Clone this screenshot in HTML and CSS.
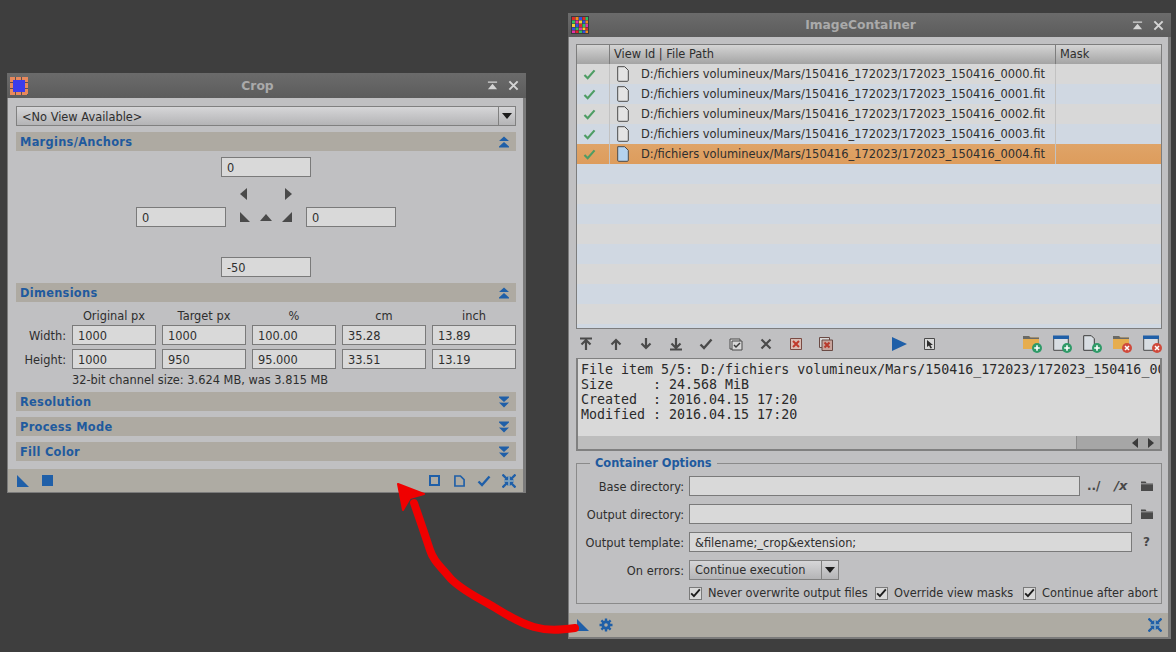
FILE: index.html
```html
<!DOCTYPE html>
<html lang="en">
<head>
<meta charset="utf-8">
<title>Crop and ImageContainer</title>
<link rel="stylesheet" href="styles.css">
</head>
<body>
<svg class="defs" aria-hidden="true">
  <symbol id="shade" viewBox="0 0 12 12"><path d="M1 1.500h10v1.600H1zM6 4l5 6H1z" fill="currentColor"/></symbol>
  <symbol id="close" viewBox="0 0 12 12"><path d="M1.500 1.500l9 9M10.500 1.500l-9 9" stroke="currentColor" stroke-width="2.200" fill="none"/></symbol>
  <symbol id="chevup" viewBox="0 0 12 12"><path d="M6 0.500l5 4.500H1zM6 6l5 4.500v1H1v-1z" fill="#1f5fa8"/></symbol>
  <symbol id="chevdown" viewBox="0 0 12 12"><path d="M1 .5h10v1L6 6 1 1.500zM1 6.500l5 .2 5-.2L6 11.500z" fill="#1f5fa8"/></symbol>
  <symbol id="corner" viewBox="0 0 12 12"><path d="M0 0l12 12H0z" fill="currentColor"/></symbol>
  <symbol id="collapse" viewBox="0 0 14 14"><path d="M.5.500l5 5M13.500.5l-5 5M.5 13.500l5-5M13.500 13.500l-5-5" stroke="#1f5fa8" stroke-width="2.300" fill="none"/><path d="M6.200 6.200V2L2 6.200zM7.800 6.200V2L12 6.200zM6.200 7.800V12L2 7.800zM7.800 7.800V12L12 7.800z" fill="#1f5fa8"/><path d="M2 7h10M7 2v10" stroke="#5a9fd8" stroke-width=".8"/></symbol>
  <symbol id="check" viewBox="0 0 14 12"><path d="M1.500 6.500l3.500 3.500 7.500-8.500" stroke="currentColor" stroke-width="2.400" fill="none"/></symbol>
  <symbol id="doc" viewBox="0 0 12 16"><path d="M.7.7h7l3.600 3.600v10a1 1 0 0 1-1 1h-8.600a1 1 0 0 1-1-1z" fill="currentColor" stroke="#4a4a4a" stroke-width="1"/></symbol>
  <symbol id="top" viewBox="0 0 14 14"><path d="M1 1.500h12M7 13V4M2.500 7.500L7 3l4.500 4.500" stroke="currentColor" stroke-width="2.200" fill="none"/></symbol>
  <symbol id="up" viewBox="0 0 14 14"><path d="M7 13V3M2.500 7.500L7 3l4.500 4.500" stroke="currentColor" stroke-width="2.200" fill="none"/></symbol>
  <symbol id="folder" viewBox="0 0 12 10"><path d="M0 .5h4.500l1 1.500H12v8H0z" fill="currentColor"/><path d="M0 2.800h12" stroke="#c0c0c2" stroke-width=".8"/></symbol>
  <symbol id="plus" viewBox="0 0 10 10"><circle cx="5" cy="5" r="5" fill="#2f9a68"/><path d="M5 2.200v5.600M2.200 5h5.600" stroke="#fff" stroke-width="1.600"/></symbol>
  <symbol id="minus" viewBox="0 0 10 10"><circle cx="5" cy="5" r="5" fill="#cf4a3c"/><path d="M3 3l4 4M7 3l-4 4" stroke="#fff" stroke-width="1.500"/></symbol>
  <symbol id="foldertool" viewBox="0 0 16 14"><path d="M0 1h6l1.500 1.500H16V14H0z" fill="#e6ad4e"/><path d="M0 1h6l1.500 1.500H16V4H0z" fill="#6a6a66"/></symbol>
  <symbol id="wintool" viewBox="0 0 16 16"><path d="M.7 1.500h14.600v13.800H.7z" fill="#d8dde2" stroke="#4a4a4a"/><path d="M0 .5h16V4H0z" fill="#1f5fa8"/></symbol>
  <symbol id="doctool" viewBox="0 0 12 16"><path d="M.7.7h7.600l3 3v11.600H.7z" fill="#d8dde2" stroke="#3c3c3c"/></symbol>
</svg>

<section class="win win-crop">
  <header class="titlebar">
    <svg class="logo" width="18" height="18" viewBox="0 0 18 18"><rect width="18" height="18" fill="#5a5052"/><path d="M0 1.500h18M0 16.500h18M1.500 0v18M16.500 0v18" stroke="#e8885c" stroke-width="3" stroke-dasharray="5 1"/><rect x="3" y="3" width="12" height="12" fill="#3c3cec"/></svg>
    <h1 class="wintitle">Crop</h1>
    <svg class="tbtn" width="11" height="11"><use href="#shade"/></svg>
    <svg class="tbtn" width="11" height="11"><use href="#close"/></svg>
  </header>
  <div class="body crop-body">
    <div class="combo combo-wide"><span class="combo-text">&lt;No View Available&gt;</span><span class="combo-btn"></span></div>
    <div class="sect"><span>Margins/Anchors</span><svg width="12" height="12"><use href="#chevup"/></svg></div>
    <div class="anchors">
      <div class="edit edit-90">0</div>
      <div class="arrows"><span class="tri-left"></span><span class="tri-right"></span></div>
      <div class="midrow">
        <div class="edit edit-90">0</div>
        <div class="cornerset">
          <svg width="10" height="10"><use href="#corner"/></svg>
          <span class="tri-up"></span>
          <svg class="flip" width="10" height="10"><use href="#corner"/></svg>
        </div>
        <div class="edit edit-90">0</div>
      </div>
      <div class="edit edit-90">-50</div>
    </div>
    <div class="sect"><span>Dimensions</span><svg width="12" height="12"><use href="#chevup"/></svg></div>
    <div class="dims">
      <span></span><span class="dh">Original px</span><span class="dh">Target px</span><span class="dh">%</span><span class="dh">cm</span><span class="dh">inch</span>
      <span class="dl">Width:</span><div class="edit">1000</div><div class="edit">1000</div><div class="edit">100.00</div><div class="edit">35.28</div><div class="edit">13.89</div>
      <span class="dl">Height:</span><div class="edit">1000</div><div class="edit">950</div><div class="edit">95.000</div><div class="edit">33.51</div><div class="edit">13.19</div>
    </div>
    <p class="info">32-bit channel size: 3.624 MB, was 3.815 MB</p>
    <div class="sect"><span>Resolution</span><svg width="12" height="12"><use href="#chevdown"/></svg></div>
    <div class="sect"><span>Process Mode</span><svg width="12" height="12"><use href="#chevdown"/></svg></div>
    <div class="sect"><span>Fill Color</span><svg width="12" height="12"><use href="#chevdown"/></svg></div>
  </div>
  <footer class="foot crop-foot">
    <svg width="12" height="12" class="blue"><use href="#corner"/></svg>
    <span class="foot-square"></span>
    <span class="spacer"></span>
    <span class="foot-outline"></span>
    <svg width="11" height="12" viewBox="0 0 12 13" class="foot-page"><path d="M1 1h6l4 4v7H1z" fill="none" stroke="#1f5fa8" stroke-width="1.800"/></svg>
    <svg width="14" height="12" class="blue"><use href="#check"/></svg>
    <svg class="foot-collapse" width="14" height="14"><use href="#collapse"/></svg>
  </footer>
</section>

<section class="win win-ic">
  <header class="titlebar">
    <svg class="logo" width="18" height="18" viewBox="0 0 18 18">
      <rect width="18" height="18" fill="#3a3a3e"/>
      <rect x="1" y="1" width="3" height="3" fill="#e02828"/><rect x="4.500" y="1" width="3" height="3" fill="#f08a20"/><rect x="8" y="1" width="3" height="3" fill="#3050e0"/><rect x="11.500" y="1" width="3" height="3" fill="#e02828"/><rect x="14.500" y="1" width="2.500" height="3" fill="#30c060"/>
      <rect x="1" y="4.500" width="3" height="3" fill="#30c060"/><rect x="4.500" y="4.500" width="3" height="3" fill="#e030a8"/><rect x="8" y="4.500" width="3" height="3" fill="#f0d030"/><rect x="11.500" y="4.500" width="3" height="3" fill="#3050e0"/><rect x="14.500" y="4.500" width="2.500" height="3" fill="#f08a20"/>
      <rect x="1" y="8" width="3" height="3" fill="#f0d030"/><rect x="4.500" y="8" width="3" height="3" fill="#3050e0"/><rect x="8" y="8" width="3" height="3" fill="#e02828"/><rect x="11.500" y="8" width="3" height="3" fill="#30c060"/><rect x="14.500" y="8" width="2.500" height="3" fill="#e030a8"/>
      <rect x="1" y="11.500" width="3" height="2.500" fill="#3050e0"/><rect x="4.500" y="11.500" width="3" height="2.500" fill="#30c060"/><rect x="8" y="11.500" width="3" height="2.500" fill="#e030a8"/><rect x="11.500" y="11.500" width="3" height="2.500" fill="#f0d030"/><rect x="14.500" y="11.500" width="2.500" height="2.500" fill="#e02828"/>
      <rect x="1" y="14.500" width="3" height="2.500" fill="#e030a8"/><rect x="4.500" y="14.500" width="3" height="2.500" fill="#e02828"/><rect x="8" y="14.500" width="3" height="2.500" fill="#30c060"/><rect x="11.500" y="14.500" width="3" height="2.500" fill="#3050e0"/><rect x="14.500" y="14.500" width="2.500" height="2.500" fill="#f08a20"/>
    </svg>
    <h1 class="wintitle">ImageContainer</h1>
    <svg class="tbtn" width="11" height="11"><use href="#shade"/></svg>
    <svg class="tbtn" width="11" height="11"><use href="#close"/></svg>
  </header>
  <div class="body ic-body">
    <div class="table">
      <div class="row head"><span></span><span>View Id | File Path</span><span>Mask</span></div>
      <div class="row"><span class="c-check"><svg width="13" height="11"><use href="#check"/></svg></span><span class="c-path"><svg class="file" width="12" height="16"><use href="#doc"/></svg>D:/fichiers volumineux/Mars/150416_172023/172023_150416_0000.fit</span><span></span></div>
      <div class="row"><span class="c-check"><svg width="13" height="11"><use href="#check"/></svg></span><span class="c-path"><svg class="file" width="12" height="16"><use href="#doc"/></svg>D:/fichiers volumineux/Mars/150416_172023/172023_150416_0001.fit</span><span></span></div>
      <div class="row"><span class="c-check"><svg width="13" height="11"><use href="#check"/></svg></span><span class="c-path"><svg class="file" width="12" height="16"><use href="#doc"/></svg>D:/fichiers volumineux/Mars/150416_172023/172023_150416_0002.fit</span><span></span></div>
      <div class="row"><span class="c-check"><svg width="13" height="11"><use href="#check"/></svg></span><span class="c-path"><svg class="file" width="12" height="16"><use href="#doc"/></svg>D:/fichiers volumineux/Mars/150416_172023/172023_150416_0003.fit</span><span></span></div>
      <div class="row selected"><span class="c-check"><svg width="13" height="11"><use href="#check"/></svg></span><span class="c-path"><svg class="file" width="12" height="16"><use href="#doc"/></svg>D:/fichiers volumineux/Mars/150416_172023/172023_150416_0004.fit</span><span></span></div>
      <div class="empty"></div><div class="empty"></div><div class="empty"></div><div class="empty"></div><div class="empty"></div><div class="empty"></div><div class="empty"></div><div class="empty"></div>
    </div>
    <div class="toolbar">
      <svg class="t" width="14" height="14"><use href="#top"/></svg>
      <svg class="t" width="14" height="14"><use href="#up"/></svg>
      <svg class="t down" width="14" height="14"><use href="#up"/></svg>
      <svg class="t down" width="14" height="14"><use href="#top"/></svg>
      <svg class="t" width="14" height="12"><use href="#check"/></svg>
      <svg class="t" width="14" height="14" viewBox="0 0 14 14"><path d="M1 2h10v10H1z" fill="#d8d8d8" stroke="#4a4a4a"/><path d="M3 4h10v9H3z" fill="#d8d8d8" stroke="#4a4a4a"/><path d="M5 8l2 2 4-4" stroke="#3a3a3a" stroke-width="1.500" fill="none"/></svg>
      <svg class="t" width="14" height="14" viewBox="-1 -1 14 14"><use href="#close" width="12" height="12"/></svg>
      <svg class="t" width="14" height="14" viewBox="0 0 14 14"><path d="M1.500 1.500h11v11h-11z" fill="#d8bcb4" stroke="#7a4a42"/><path d="M4 4l6 6M10 4l-6 6" stroke="#c0392b" stroke-width="2"/></svg>
      <svg class="t" width="14" height="14" viewBox="0 0 14 14"><path d="M.5.500h10v10H.500z" fill="#d8d8d8" stroke="#6a4a44"/><path d="M3 3h10.500v10.500H3z" fill="#c8a49c" stroke="#6a4a44"/><path d="M5.500 5.500l5 5M10.500 5.500l-5 5" stroke="#b83a2c" stroke-width="2"/></svg>
      <svg class="t-play" width="16" height="16" viewBox="0 0 16 16"><path d="M1 1l15 7-15 7z" fill="#1f5fa8"/></svg>
      <svg class="t-pick" width="11" height="12" viewBox="0 0 11 12"><path d="M.5.500h10v11H.500z" fill="#d8d8d8" stroke="#4a4a4a"/><path d="M3 2v7l2-1.500 1.500 3 1.500-.6L6.500 7H9z" fill="#2c2c2c"/></svg>
      <span class="spacer"></span>
      <span class="ti"><svg width="16" height="14"><use href="#foldertool"/></svg><svg class="badge" width="10" height="10"><use href="#plus"/></svg></span>
      <span class="ti"><svg width="16" height="16"><use href="#wintool"/></svg><svg class="badge" width="10" height="10"><use href="#plus"/></svg></span>
      <span class="ti"><svg width="12" height="16"><use href="#doctool"/></svg><svg class="badge" width="10" height="10"><use href="#plus"/></svg></span>
      <span class="ti"><svg width="16" height="14"><use href="#foldertool"/></svg><svg class="badge" width="10" height="10"><use href="#minus"/></svg></span>
      <span class="ti"><svg width="16" height="16"><use href="#wintool"/></svg><svg class="badge" width="10" height="10"><use href="#minus"/></svg></span>
    </div>
    <div class="console">
      <pre class="console-text">File item 5/5: D:/fichiers volumineux/Mars/150416_172023/172023_150416_0004.fit
Size     : 24.568 MiB
Created  : 2016.04.15 17:20
Modified : 2016.04.15 17:20</pre>
      <div class="scroll"><span class="thumb"></span><span class="spacer"></span><span class="tri-left tri-sl"></span><span class="tri-right tri-sr"></span></div>
    </div>
    <fieldset class="opts">
      <legend>Container Options</legend>
      <div class="opt"><span class="opt-l">Base directory:</span><div class="edit edit-flex"></div><span class="tail tail-3"><b>../</b><b class="slashx">/x</b><svg class="dark" width="12" height="10"><use href="#folder"/></svg></span></div>
      <div class="opt"><span class="opt-l">Output directory:</span><div class="edit edit-flex"></div><span class="tail"><svg class="dark" width="12" height="10"><use href="#folder"/></svg></span></div>
      <div class="opt"><span class="opt-l">Output template:</span><div class="edit edit-flex">&amp;filename;_crop&amp;extension;</div><span class="tail"><b>?</b></span></div>
      <div class="opt"><span class="opt-l">On errors:</span><div class="combo combo-err"><span class="combo-text">Continue execution</span><span class="combo-btn"></span></div></div>
      <div class="checks">
        <label class="ck ck-1"><span class="box"><svg width="11" height="10"><use href="#check"/></svg></span>Never overwrite output files</label>
        <label class="ck ck-2"><span class="box"><svg width="11" height="10"><use href="#check"/></svg></span>Override view masks</label>
        <label class="ck"><span class="box"><svg width="11" height="10"><use href="#check"/></svg></span>Continue after abort</label>
      </div>
    </fieldset>
  </div>
  <footer class="foot ic-foot">
    <svg width="12" height="12" class="blue"><use href="#corner"/></svg>
    <svg width="14" height="14" viewBox="0 0 14 14" class="gear"><circle cx="7" cy="7" r="4.500" fill="#1f5fa8"/><path d="M7 .5v13M.5 7h13M2.400 2.400l9.200 9.200M11.600 2.400l-9.200 9.200" stroke="#1f5fa8" stroke-width="2.400"/><circle cx="7" cy="7" r="1.800" fill="#aeaba3"/></svg>
    <span class="spacer"></span>
    <svg width="14" height="14"><use href="#collapse"/></svg>
  </footer>
</section>

<svg class="arrow" width="1176" height="652" viewBox="0 0 1176 652" aria-hidden="true">
  <path d="M575 628C560 630 548 631 534 627C515 622 500 610 487 603C472 595 460 588 451 579C440 566 433 560 430 550C425 535 420 520 414 503" fill="none" stroke="#f00000" stroke-width="8" stroke-linecap="round" stroke-linejoin="round"/>
  <path d="M398 484L424 494L410 498L403 510Z" fill="#f00000" stroke="#f00000" stroke-width="2" stroke-linejoin="round"/>
</svg>
</body>
</html>
```
FILE: styles.css
```css
* { box-sizing: border-box; }
html, body { margin: 0; height: 652px; overflow: hidden; background: #3e3e3e; }
body { position: relative; font: 11.400px/14px "DejaVu Sans", Verdana, sans-serif; color: #2e2e2e; }
.defs { position: absolute; width: 0; height: 0; }
p, h1 { margin: 0; }

.win { position: absolute; display: flex; flex-direction: column; border-style: solid; border-color: #7b7b7b; border-width: 0 3px 2px 1px; background: #c0c0c2; }
.win-crop { left: 7px; top: 73px; width: 519px; height: 420px; border-bottom-width: 1px; }
.win-ic { left: 568px; top: 13px; width: 603px; height: 626px; }

.titlebar { display: flex; align-items: center; flex: none; height: 25px; margin: 0 -3px 0 -1px; padding: 0 7px 0 3px; gap: 10px; background: linear-gradient(#6b6b6b, #5c5c5c); color: #d4d4d4; }
.win-ic .titlebar { height: 24px; }
.wintitle { flex: 1; text-align: center; font: bold 12.300px/16px "DejaVu Sans", sans-serif; color: #aaaaaa; }
.tbtn { display: block; }

.body { flex: 1; min-height: 0; }
.crop-body { padding: 8px 7px 0 8px; }
.ic-body { padding: 7px 6px 0 7px; }

.foot { display: flex; align-items: center; flex: none; background: #aeaba3; }
.crop-foot { height: 23px; padding: 0 7px 0 9px; gap: 12px; }
.spacer { flex: 1; }
.blue { color: #1f5fa8; display: block; }
.foot-square { width: 11px; height: 11px; margin-left: 1px; background: #1f5fa8; }
.foot-outline { width: 11px; height: 11px; margin-right: 2px; border: 2px solid #1f5fa8; }
.foot-collapse { margin-left: -1px; }
.ic-foot { height: 24px; padding: 0 6px 0 8px; gap: 10px; }

.combo { display: flex; align-items: center; height: 20px; border: 1px solid #808080; background: linear-gradient(#d6d6d8, #b4b4b6); }
.combo-text { flex: 1; padding: 1px 0 0 5px; white-space: nowrap; }
.combo-err .combo-text { padding-top: 0; }
.combo-btn { position: relative; width: 17px; height: 100%; border-left: 1px solid #808080; }
.combo-btn::after { content: ""; position: absolute; left: 3px; top: 6px; border: 5px solid transparent; border-top: 6px solid #1c1c1c; border-bottom: 0; }
.combo-err { width: 150px; }

.sect { display: flex; align-items: center; justify-content: space-between; height: 19px; margin-top: 6px; padding: 0 6px 0 4px; background: #aeaaa2; color: #1f5a9e; font-weight: bold; letter-spacing: .3px; }
.sect > span { padding-top: 1px; }
.sect > svg { margin-top: 1px; }

.edit { height: 20px; padding-left: 5px; border: 1px solid #7a7a7a; background: #d9d9d9; line-height: 20px; white-space: nowrap; }
.edit-90 { width: 90px; }
.edit-flex { flex: 1; }

.anchors { display: flex; flex-direction: column; align-items: center; margin-top: 6px; }
.arrows { display: flex; justify-content: space-between; align-items: center; width: 52px; height: 30px; padding-top: 4px; }
.tri-left { width: 0; height: 0; border: 6px solid transparent; border-right: 7px solid #4a4a4a; border-left: 0; }
.tri-right { width: 0; height: 0; border: 6px solid transparent; border-left: 7px solid #4a4a4a; border-right: 0; }
.tri-up { width: 0; height: 0; border: 6px solid transparent; border-bottom: 7px solid #4a4a4a; border-top: 0; }
.tri-sl { border-width: 5px 6px 5px 0; border-right-color: #3a3a3a; }
.tri-sr { border-width: 5px 0 5px 6px; border-left-color: #3a3a3a; }
.midrow { display: flex; align-items: center; margin-bottom: 30px; }
.cornerset { display: flex; justify-content: center; align-items: center; gap: 10px; width: 80px; color: #4a4a4a; }
.flip { transform: scaleX(-1); }

.dims { display: grid; grid-template-columns: 50px repeat(5, 84px); column-gap: 6px; row-gap: 4px; grid-template-rows: 14px 20px 20px; margin-top: 5px; }
.dh { text-align: center; line-height: 18px; white-space: nowrap; }
.dl { text-align: right; line-height: 22px; white-space: nowrap; }
.info { height: 13px; margin-top: 4px; padding-left: 56px; line-height: 14px; }

.table { height: 285px; border: 1px solid #7d7d7d; overflow: hidden; background: #d0d8e2; }
.table > :nth-child(even) { background: #d8d8d8; }
.table > :nth-child(odd) { background: #d0d8e2; }
.row { display: grid; grid-template-columns: 33px 446px 1fr; height: 20px; line-height: 20px; }
.row > span { border-right: 1px solid #c2c2c2; }
.row > span:last-child { border-right: 0; padding-left: 4px; }
.row.head { height: 19px; background: linear-gradient(#d4d4d4, #a4a4a4); line-height: 19px; }
.head > span { border-right: 1px solid #7d7d7d; }
.head > span:nth-child(2) { padding-left: 4px; }
.row.selected { background: linear-gradient(#dfa468, #dd9c5c); }
.c-check { display: flex; align-items: center; justify-content: center; padding-right: 8px; color: #4e9d64; }
.c-path { display: flex; align-items: center; padding-left: 7px; white-space: nowrap; font-size: 11.450px; }
.file { margin-right: 12px; color: #e4e4e4; flex: none; }
.selected .file { color: #b4d2ee; }
.empty { height: 20px; }

.toolbar { display: flex; align-items: center; height: 29px; padding-left: 3px; color: #4a4a4a; }
.t { margin-right: 16px; display: block; flex: none; }
.t:nth-child(9) { margin-right: 0; }
.down { transform: scaleY(-1); }
.t-play { margin-left: 58px; }
.t-pick { margin-left: 17px; }
.ti { position: relative; display: flex; width: 20px; height: 18px; margin-left: 10px; padding-left: 1px; align-items: flex-start; }
.badge { position: absolute; right: 0; bottom: 0; }

.console { display: flex; flex-direction: column; height: 93px; border: 2px solid #808080; border-top-width: 1px; background: #d9d9d9; overflow: hidden; }
.console-text { flex: 1; margin: 0; padding: 3px 3px; font: 13.300px/15px "DejaVu Sans Mono", "Liberation Mono", monospace; color: #2a2a2a; white-space: pre; overflow: hidden; }
.scroll { display: flex; align-items: center; flex: none; height: 13px; background: #a6a6a6; padding-right: 6px; gap: 10px; }
.thumb { width: 499px; height: 100%; background: #bdbdbd; border-right: 1px solid #8c8c8c; }

.opts { margin: 6px 0 0; padding: 6px 0 0; height: 147px; border: 1px solid #8a8a8a; min-width: 0; }
.opts legend { margin-left: 13px; padding: 0 5px; color: #1f5a9e; font-weight: bold; line-height: 13px; }
.opt { display: flex; align-items: center; height: 20px; margin-bottom: 8px; }
.opt-l { width: 107px; margin-right: 5px; padding-top: 2px; text-align: right; white-space: nowrap; flex: none; }
.tail { display: flex; justify-content: center; align-items: center; width: 29px; color: #484848; font-weight: bold; font-size: 12px; flex: none; }
.tail-3 { width: 81px; justify-content: space-between; padding: 0 8px 0 7px; }
.slashx { font-size: 13px; font-style: italic; }
.dark { color: #4a4a4a; display: block; }
.checks { display: flex; margin: -2px 0 0 112px; }
.ck { display: flex; align-items: center; white-space: nowrap; }
.ck-1 { width: 186px; }
.ck-2 { width: 148px; }
.box { display: flex; align-items: center; justify-content: center; width: 13px; height: 13px; margin-right: 6px; border: 1px solid #7a7a7a; background: #d9d9d9; color: #1c1c1c; }
.arrow { position: absolute; left: 0; top: 0; z-index: 5; pointer-events: none; }
```
